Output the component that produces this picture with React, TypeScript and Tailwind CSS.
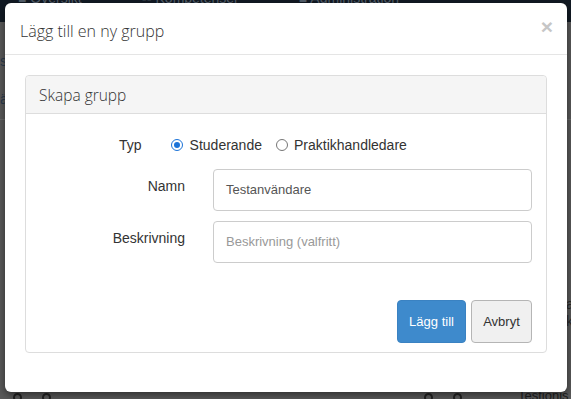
import React from "react";

export default function App() {
  return (
    <div className="relative w-[571px] h-[399px] overflow-hidden bg-[#5a5a5a] font-['Liberation_Sans',Arial,sans-serif]">
      {/* page behind the backdrop */}
      <div className="flex flex-col h-full">
        <div className="h-[22px] bg-[#121a24] flex items-start gap-[60px] pl-[18px] text-[14px] text-[#55606c] leading-[14px] overflow-hidden">
          <span className="-mt-[9px]">■ Översikt</span>
          <span className="-mt-[9px]">▪▪ Kompetenser</span>
          <span className="-mt-[9px]">■ Administration</span>
        </div>
        <div className="flex-1 flex flex-col">
          <div className="h-[98px] border-b border-[#6a6a6a] text-[#2b3a4e] text-[14px] pt-[32px] leading-[14px]">
            <div>st</div>
            <div className="mt-[24px]">ä</div>
          </div>
          <div className="flex-1 flex justify-end pt-[176px] text-[#2a2a2a] text-[14px] leading-[16px]">
            <div className="w-[5px] overflow-hidden flex flex-col gap-[1px]">
              <span>a</span>
              <span>k</span>
            </div>
          </div>
          <div className="h-[7px] flex items-start text-[#222] text-[13px] leading-[13px] overflow-hidden">
            <span className="ml-[13px] mt-[1px] w-[9px] h-[9px] rounded-full border-2 border-[#222]"></span>
            <span className="ml-[20px] mt-[1px] w-[9px] h-[9px] rounded-full border-2 border-[#222]"></span>
            <span className="ml-[373px] mt-[1px] w-[9px] h-[9px] rounded-full border-2 border-[#222]"></span>
            <span className="ml-[20px] mt-[1px] w-[9px] h-[9px] rounded-full border-2 border-[#222]"></span>
            <span className="ml-[56px] -mt-[3px] text-[#1e1e1e]">Testionis</span>
          </div>
        </div>
      </div>

      {/* modal overlay */}
      <div className="absolute inset-0 pt-[3px] pl-[5px]">
        <div className="w-[562px] h-[389px] bg-white rounded-[6px] shadow-[0_3px_9px_rgba(0,0,0,0.5)] flex flex-col">
          <div className="h-[52px] border-b border-[#e5e5e5] flex items-start justify-between pl-[15px] pr-[14px]">
            <h4 className="mt-[17px] text-[16px] leading-[22px] font-light text-[#333] font-['Open_Sans',sans-serif]">
              Lägg till en ny grupp
            </h4>
            <span className="mt-[13px] text-[21px] leading-[21px] font-bold text-[#c6c6c6] font-['Liberation_Sans',Arial,sans-serif]">
              ×
            </span>
          </div>
          <div className="pt-[20px] px-[20px]">
            <div className="h-[278px] border border-[#dddddd] rounded-[4px] flex flex-col">
              <div className="h-[38px] bg-[#f5f5f5] border-b border-[#dddddd] rounded-t-[4px] flex items-center pl-[13px]">
                <span className="text-[15.5px] leading-[20px] font-light text-[#333] font-['Open_Sans',sans-serif]">
                  Skapa grupp
                </span>
              </div>
              <div className="flex flex-col pt-[21px] pr-[14px] text-[14px] text-[#333]">
                <div className="h-[20px] flex items-center pl-[93px] leading-[20px]">
                  <span>Typ</span>
                  <span className="ml-[29px] w-[12px] h-[12px] rounded-full border-[1.5px] border-[#1b73d8] flex items-center justify-center">
                    <span className="w-[6px] h-[6px] rounded-full bg-[#1b73d8]"></span>
                  </span>
                  <span className="ml-[7px]">Studerande</span>
                  <span className="ml-[14px] w-[12px] h-[12px] rounded-full border border-[#767676]"></span>
                  <span className="ml-[6px]">Praktikhandledare</span>
                </div>
                <div className="mt-[14px] flex items-start">
                  <label className="w-[159px] text-right pt-[7px] leading-[20px]">Namn</label>
                  <div className="ml-[28px] flex-1 h-[42px] border border-[#cccccc] rounded-[4px] flex items-center pl-[12px] text-[13px] text-[#555]">
                    Testanvändare
                  </div>
                </div>
                <div className="mt-[10px] flex items-start">
                  <label className="w-[159px] text-right pt-[7px] leading-[20px]">Beskrivning</label>
                  <div className="ml-[28px] flex-1 h-[42px] border border-[#cccccc] rounded-[4px] flex items-center pl-[12px] text-[13px] text-[#999]">
                    Beskrivning (valfritt)
                  </div>
                </div>
                <div className="mt-[37px] flex justify-end gap-[5px]">
                  <button className="w-[69px] h-[43px] rounded-[4px] bg-[#3e8acc] border border-[#3a82c2] text-white text-[13px]">
                    Lägg till
                  </button>
                  <button className="w-[61px] h-[43px] rounded-[4px] bg-[#f0f0f0] border border-[#b5b5b5] text-[#333] text-[13px]">
                    Avbryt
                  </button>
                </div>
              </div>
            </div>
          </div>
        </div>
      </div>
    </div>
  );
}
